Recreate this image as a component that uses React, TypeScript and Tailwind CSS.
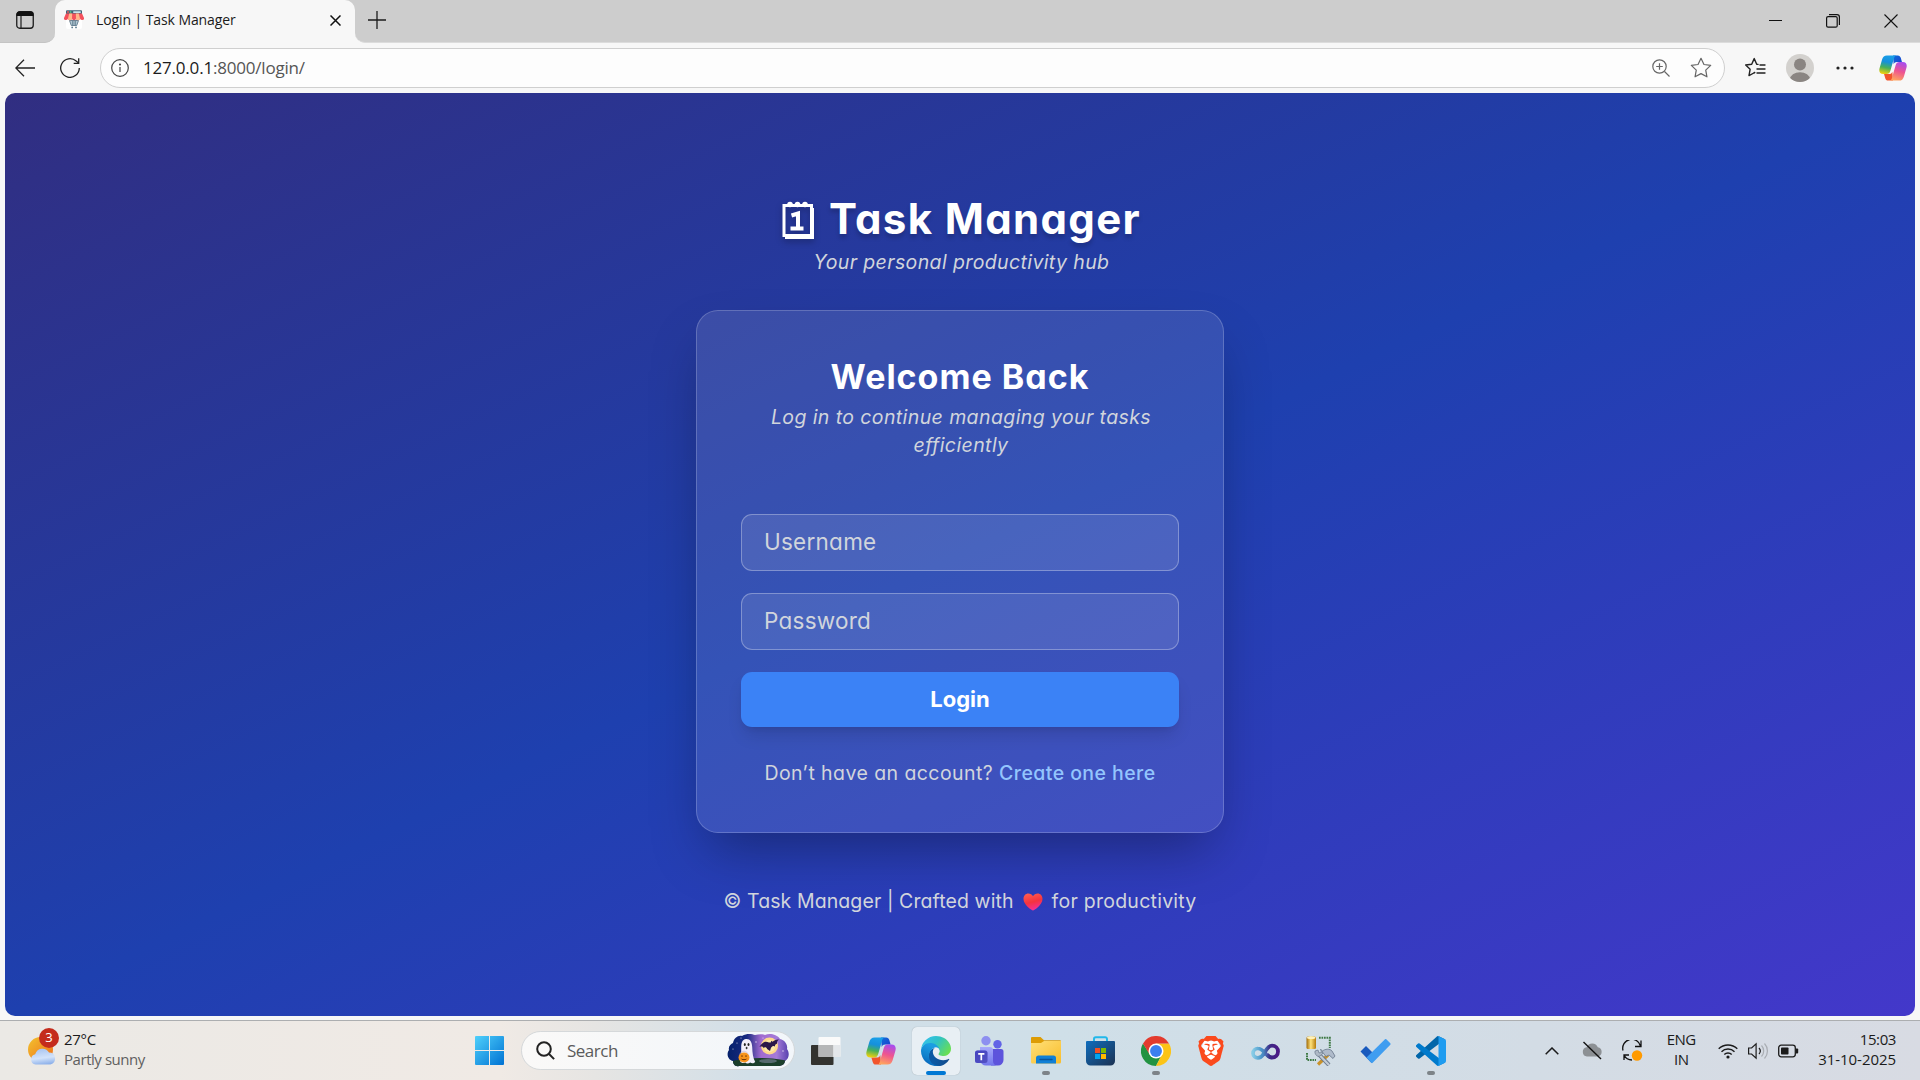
import React from 'react';
import type { ReactNode } from 'react';
import { SiBrave } from 'react-icons/si';

const UI_FONT = "font-['Open_Sans',sans-serif]";
const PAGE_FONT = "font-['Inter',sans-serif] [font-feature-settings:'cv11']";

function StorefrontIcon() {
  return (
    <svg width="20" height="19" viewBox="0 0 20 19">
      <rect x="2" y="7" width="16" height="12" rx="2" fill="#fff" />
      <rect x="2" y="0.3" width="16" height="4" rx="1" fill="#3f6379" />
      <rect x="9" y="1.2" width="8" height="1.8" rx="0.9" fill="#c9e4ee" />
      <circle cx="4" cy="2" r="0.9" fill="#f25c5c" />
      <circle cx="6.5" cy="2" r="0.9" fill="#4cc38a" />
      <path d="M5.500 10.500l1.800 5h5.400l1.800-5z" fill="#b4c8d4" stroke="#5d7b8d" strokeWidth="0.9" />
      <path d="M8.500 11v4M10 11v4M11.500 11v4" stroke="#4b6b7e" strokeWidth="0.6" />
      <circle cx="8.2" cy="17.400" r="0.9" fill="#5d7b8d" />
      <circle cx="12" cy="17.400" r="0.9" fill="#5d7b8d" />
      <path d="M2 3.500h16l2 4.500a2 1.700 0 0 1-4 .600 2 1.700 0 0 1-4 0 2 1.700 0 0 1-4 0 2 1.700 0 0 1-4 0 2 1.700 0 0 1-4-.600z" fill="#f4505c" />
      <path d="M5.200 3.500h3L8 8.600a2 1.700 0 0 1-4 0zM11.800 3.500h3L16 8.600a2 1.700 0 0 1-4 0z" fill="#ffb68a" />
    </svg>
  );
}

function CopilotIcon({ id, size }: { id: string; size: number }) {
  return (
    <svg width={size} height={size} viewBox="0 0 30 30">
      <defs>
        <linearGradient id={`${id}-a`} x1="0.5" y1="0" x2="0.3" y2="1">
          <stop offset="0" stopColor="#1a9fe8" />
          <stop offset="0.35" stopColor="#1590dc" />
          <stop offset="0.65" stopColor="#46b05a" />
          <stop offset="1" stopColor="#f4d10c" />
        </linearGradient>
        <linearGradient id={`${id}-b`} x1="0.7" y1="0" x2="0.4" y2="1">
          <stop offset="0" stopColor="#a64df0" />
          <stop offset="0.5" stopColor="#ee5490" />
          <stop offset="1" stopColor="#ffa45e" />
        </linearGradient>
        <linearGradient id={`${id}-c`} x1="0" y1="0" x2="1" y2="1">
          <stop offset="0" stopColor="#0f6fd8" />
          <stop offset="1" stopColor="#1b3fd0" />
        </linearGradient>
      </defs>
      <path d="M15 1.5h5.2c1.7 0 2.6 1 3.1 2.6L24.600 8.500h-5.400c-1.800 0-2.900.8-3.500 2.600z" fill={`url(#${id}-c)`} />
      <path d="M15 28.500H9.800c-1.700 0-2.600-1-3.100-2.600L5.400 21.500h5.400c1.800 0 2.900-.8 3.500-2.600z" fill="#f2552c" />
      <path d="M8.500 1.500H19c-1.500 0-2.300.9-2.800 2.600l-4 13.900c-.7 2.500-1.900 3.500-4.300 3.500H4.500C1 21.500-.4 18.900.6 15.200L3.300 6c.9-3 2.400-4.500 5.200-4.500z" fill={`url(#${id}-a)`} />
      <path d="M21.500 28.500H11c1.500 0 2.300-.9 2.800-2.600l4-13.900c.7-2.500 1.900-3.500 4.300-3.500h3.400c3.500 0 4.900 2.600 3.900 6.300L26.700 24c-.9 3-2.400 4.500-5.200 4.500z" fill={`url(#${id}-b)`} />
    </svg>
  );
}

function TabStrip() {
  return (
    <div className="flex h-[43px] bg-[#cdcdcd]">
      <div className="flex w-[55px] bg-[#f7f7f7]">
        <div className="flex w-full items-center justify-center rounded-br-[10px] border-b border-[#c4c4c4] bg-[#cdcdcd] pr-[5px] pb-[3px]">
          <svg width="18" height="18" viewBox="0 0 18 18" fill="none">
            <rect x="0.75" y="0.75" width="16.5" height="16.5" rx="3" stroke="#1b1b1b" strokeWidth="1.3" />
            <path d="M0.500 5V3.500a3 3 0 0 1 3-3h11a3 3 0 0 1 3 3V5z" fill="#111" />
            <path d="M5 5v12" stroke="#1b1b1b" strokeWidth="1.200" />
          </svg>
        </div>
      </div>
      <div className="flex w-[300px] items-center rounded-t-[10px] bg-[#f7f7f7] pb-[4px] pl-[9px]">
        <StorefrontIcon />
        <span className="ml-[12px] flex-1 text-[14px] leading-5 tracking-[-0.090px] whitespace-nowrap text-[#1b1b1b]">Login | Task Manager</span>
        <svg className="mt-[2px] mr-[14px]" width="11" height="11" viewBox="0 0 11 11" stroke="#111" strokeWidth="1.500" fill="none">
          <path d="M0.500 0.500l10 10M10.500 0.500l-10 10" />
        </svg>
      </div>
      <div className="flex flex-1 bg-[#f7f7f7]">
        <div className="flex flex-1 items-center rounded-bl-[10px] border-b border-[#dcdcdc] bg-[#cdcdcd] pb-[2px]">
          <svg className="ml-[13px]" width="18" height="18" viewBox="0 0 18 18" stroke="#1b1b1b" strokeWidth="1.300" fill="none">
            <path d="M9 0v18M0 9h18" />
          </svg>
          <div className="mt-[2px] ml-auto flex items-center gap-[44px] pr-[22px]">
            <svg width="13" height="14" viewBox="0 0 13 14" stroke="#111" fill="none"><path d="M0 6.500h13" /></svg>
            <svg width="14" height="14" viewBox="0 0 14 14" stroke="#111" strokeWidth="1.200" fill="none">
              <rect x="0.600" y="2.600" width="10.600" height="10.600" rx="1.500" />
              <path d="M3 0.600h8a2.400 2.400 0 0 1 2.400 2.400v8" />
            </svg>
            <svg width="14" height="14" viewBox="0 0 14 14" stroke="#111" strokeWidth="1.100" fill="none"><path d="M0.500 0.500l13 13M13.500 0.500l-13 13" /></svg>
          </div>
        </div>
      </div>
    </div>
  );
}

const STAR = 'M10 1.200l2.700 5.600 6.100.8-4.500 4.300 1.100 6.100L10 15.100 4.600 18l1.100-6.100L1.200 7.600l6.100-.8z';

function AddressBar() {
  return (
    <div className="flex h-[50px] items-center">
      <svg className="ml-[15px]" width="20" height="18" viewBox="0 0 20 18" stroke="#222" strokeWidth="1.300" fill="none">
        <path d="M20 9H0.800M9 0.800L0.800 9l8.200 8.200" />
      </svg>
      <svg className="ml-[25px]" width="20" height="20" viewBox="0 0 20 20" stroke="#222" strokeWidth="1.300" fill="none">
        <path d="M19.300 10a9.300 9.300 0 1 1-3.100-6.900L18.500 5" />
        <path d="M18.700 0.300v5h-5" />
      </svg>
      <div className="ml-[20px] flex h-[40px] w-[1625px] items-center rounded-full border border-[#cfcfcf] bg-[#fdfdfd]">
        <svg className="ml-[10px]" width="18" height="18" viewBox="0 0 18 18" fill="none" stroke="#444" strokeWidth="1.200">
          <circle cx="9" cy="9" r="8.300" />
          <path d="M9 8v5" />
          <circle cx="9" cy="5.500" r="0.500" fill="#444" />
        </svg>
        <div className="ml-[14px] flex-1 text-[17px] tracking-[-0.200px] text-[#555]"><span className="text-[#1b1b1b]">127.0.0.1</span>:8000/login/</div>
        <svg width="18" height="18" viewBox="0 0 18 18" stroke="#666" strokeWidth="1.200" fill="none">
          <circle cx="7.500" cy="7.500" r="6.700" />
          <path d="M12.500 12.500l5 5M7.500 4.200v6.600M4.200 7.500h6.600" />
        </svg>
        <svg className="mr-[12px] ml-[20px]" width="22" height="22" viewBox="0 0 20 20" stroke="#666" strokeWidth="1.100" fill="none" strokeLinejoin="round">
          <path d={STAR} />
        </svg>
      </div>
      <svg className="ml-[19px]" width="22" height="22" viewBox="0 0 22 22" stroke="#222" strokeWidth="1.400" fill="none" strokeLinejoin="round" strokeLinecap="round">
        <path d="M14 7.400l-1.300-.2-2.500-5.600-2.500 5.600-6 .8 4.400 4.300L5 18.600l4.800-2.600 1-.5M16 8h5M13 12h8M13 16h8" />
      </svg>
      <svg className="ml-[20px]" width="28" height="28" viewBox="0 0 28 28">
        <clipPath id="avatar"><circle cx="14" cy="14" r="14" /></clipPath>
        <g clipPath="url(#avatar)">
          <rect width="28" height="28" fill="#d3d1ce" />
          <circle cx="14" cy="10.500" r="6" fill="#8a8582" />
          <ellipse cx="14" cy="25.500" rx="10" ry="7.300" fill="#8a8582" />
        </g>
      </svg>
      <svg className="ml-[22px]" width="18" height="4" viewBox="0 0 18 4" fill="#222">
        <circle cx="2" cy="2" r="1.600" /><circle cx="9" cy="2" r="1.600" /><circle cx="16" cy="2" r="1.600" />
      </svg>
      <div className="ml-[25px]"><CopilotIcon id="bar" size={28} /></div>
    </div>
  );
}

function CalendarGlyph() {
  return (
    <svg className="mt-[3px] drop-shadow-[0_3px_3px_rgba(0,0,0,0.25)]" width="32" height="39" viewBox="0 0 32 39" fill="none">
      <path d="M2 4.500h27.500v30H2z" stroke="#fff" strokeWidth="3" />
      <path d="M3 36.500h28V7" stroke="#fff" strokeWidth="3" />
      <path d="M7 4.500h18" stroke="#fff" strokeWidth="3" />
      <circle cx="8" cy="3.500" r="2.800" fill="#fff" /><circle cx="15.500" cy="3.500" r="2.800" fill="#fff" /><circle cx="23" cy="3.500" r="2.800" fill="#fff" />
      <path d="M9.500 14.500l6.500-2v14.500M8.500 27.500h13" stroke="#fff" strokeWidth="4" />
    </svg>
  );
}

function Heart() {
  return (
    <svg className="mx-[9px] mt-px" width="20" height="18" viewBox="0 0 20 18">
      <linearGradient id="heart" x1="0.300" y1="0" x2="0.600" y2="1">
        <stop offset="0" stopColor="#ff5b4e" /><stop offset="0.500" stopColor="#f5333f" /><stop offset="1" stopColor="#f52fa0" />
      </linearGradient>
      <path d="M10 17.500c-1 0-9.500-5.500-9.500-11.500C.500 2.800 2.700.600 5.300.600c2 0 3.700 1 4.700 2.700C11 1.600 12.700.600 14.700.600c2.600 0 4.800 2.200 4.800 5.400 0 6-8.500 11.500-9.500 11.500z" fill="url(#heart)" />
    </svg>
  );
}

function Field({ label }: { label: string }) {
  return (
    <div className="flex h-[57px] items-center rounded-[11px] border border-white/30 bg-white/10 pb-px pl-[22px] text-[22.500px] tracking-[0.250px] text-gray-300">{label}</div>
  );
}

function LoginPage() {
  return (
    <main className={`${PAGE_FONT} mx-[5px] flex h-[923px] flex-col items-center rounded-[10px] bg-[linear-gradient(to_bottom_right,#312e81,#1e40af,#4338ca)]`}>
      <h1 className="mt-[102px] flex h-12 items-center gap-[15px] pl-[3px] text-[42px] leading-[48px] font-bold tracking-[1.350px] whitespace-nowrap text-white">
        <CalendarGlyph />
        <span className="[text-shadow:0_4px_4px_rgba(0,0,0,0.18)]">Task Manager</span>
      </h1>
      <p className="mt-[5px] pl-[3px] text-[19.500px] leading-7 tracking-[0.380px] text-gray-300 italic">Your personal productivity hub</p>
      <section className="mt-[34px] flex h-[523px] w-[528px] flex-col rounded-[22px] border border-white/20 bg-white/10 px-[44px] pt-[45px] shadow-[0_27px_55px_-13px_rgba(0,0,0,0.340)]">
        <h2 className="mt-px text-center text-[34px] leading-10 font-bold tracking-[1px] text-white">Welcome Back</h2>
        <p className="mt-[6px] pl-[2px] text-center text-[19.500px] leading-7 tracking-[0.400px] text-gray-300 italic">Log in to continue managing your tasks efficiently</p>
        <div className="mt-[55px] flex flex-col gap-[22px]">
          <Field label="Username" />
          <Field label="Password" />
          <button className="h-[55px] rounded-[11px] bg-[#3b82f6] text-[22px] font-bold text-white shadow-[0_11px_17px_-3px_rgba(0,0,0,0.120),0_4px_7px_-4px_rgba(0,0,0,0.120)]">Login</button>
        </div>
        <p className="mt-[32px] text-center text-[19.500px] leading-7 tracking-[0.430px] whitespace-nowrap text-gray-300">
          Don’t have an account? <a className="font-medium text-[#93c5fd]">Create one here</a>
        </p>
      </section>
      <footer className="mt-[54px] flex items-center text-[19.500px] leading-7 tracking-[0.100px] text-gray-300">
        <span>© Task Manager | Crafted with</span>
        <Heart />
        <span className="tracking-[0.250px]">for productivity</span>
      </footer>
    </main>
  );
}

function WeatherIcon() {
  return (
    <div className="relative h-[37px] w-[32px]">
      <svg width="32" height="37" viewBox="0 0 32 37">
        <defs>
          <linearGradient id="sun" x1="0" y1="0" x2="1" y2="1"><stop offset="0" stopColor="#f2c32e" /><stop offset="1" stopColor="#ef6c1a" /></linearGradient>
          <linearGradient id="cloud" x1="0.300" y1="0" x2="0.500" y2="1"><stop offset="0" stopColor="#a8c4f0" /><stop offset="0.600" stopColor="#d3e3fa" /><stop offset="1" stopColor="#8fb2ea" /></linearGradient>
        </defs>
        <circle cx="12.500" cy="21.500" r="12.500" fill="url(#sun)" />
        <path d="M7.500 36.500a5.200 5.200 0 0 1-.3-10.200A7.500 7.500 0 0 1 21 24.500a6.100 6.100 0 0 1 1.500 12z" fill="url(#cloud)" />
      </svg>
      <span className="absolute top-0 left-[11px] flex size-[20px] items-center justify-center rounded-full bg-[#c42b1c] text-[13px] text-white">3</span>
    </div>
  );
}

function HalloweenArt() {
  return (
    <svg width="62" height="33" viewBox="0 0 62 33">
      <defs>
        <linearGradient id="night" x1="0" y1="0" x2="1" y2="0"><stop offset="0" stopColor="#04206a" /><stop offset="0.320" stopColor="#182a80" /><stop offset="0.550" stopColor="#a26bd0" /><stop offset="0.800" stopColor="#a57bd8" /><stop offset="1" stopColor="#5640ae" /></linearGradient>
        <clipPath id="blob"><path d="M6 27C1 26-1 20 2 16c-1-4 2-6 4-7 1-5 5-8 9-7 5-3 10-2 13-1 4-1 8-1 10 0 4-2 12-1 15 4 5 1 8 6 7 10 3 4 2 10-2 12 0 3-3 5-7 5H12c-4 1-6-2-6-5z" /></clipPath>
      </defs>
      <g clipPath="url(#blob)">
        <rect width="62" height="33" fill="url(#night)" />
        <ellipse cx="33" cy="31" rx="33" ry="7" fill="#1c3f2b" />
        <ellipse cx="41" cy="27" rx="9" ry="2" fill="#7e879b" opacity="0.600" />
        <circle cx="42.500" cy="12" r="8.500" fill="#ffd88c" />
        <circle cx="42.500" cy="12" r="6" fill="#ffeaa8" />
        <g fill="#fff" opacity="0.800"><circle cx="10" cy="9" r="0.600" /><circle cx="6" cy="15" r="0.600" /><circle cx="14" cy="4" r="0.600" /><circle cx="29" cy="8" r="0.700" /><circle cx="36" cy="4" r="0.600" /><circle cx="56" cy="17" r="0.700" /></g>
      </g>
      <path d="M19 5c4-.5 6 3 6.200 8 .2 6 .8 11 3 15-2 2-4 1-5 .5-2 1.500-4 1-5 0-2 1-4 .5-5-1 1-5 1-9 1-14C14.300 9 15 5.500 19 5z" fill="#f3effa" />
      <ellipse cx="17.800" cy="10.500" rx="1" ry="1.600" fill="#222" /><ellipse cx="21.500" cy="10.500" rx="1" ry="1.600" fill="#222" />
      <ellipse cx="19.600" cy="14" rx="0.900" ry="1.200" fill="#333" />
      <path d="M13 21c0-5 8-5 8 0" stroke="#c9c3d8" strokeWidth="0.800" fill="none" />
      <ellipse cx="17" cy="23.500" rx="5.500" ry="5" fill="#f7941d" />
      <path d="M14 22.500l1-1.500 1 1.500zM18 22.500l1-1.500 1 1.500zM13.500 24.500q3.500 3.500 7 0-3.500 1.400-7 0z" fill="#5a2500" />
      <path d="M52 5.500c-3-.2-5 .8-6.500 2.300l-1.200-1-.6 1.600-1.800.2c-3-1.700-6.500-1-9.500 4.400 2-.8 3.400-.5 4 .800 1.700-1.200 3.200-.7 3.700 1.200l2.900 2 1-3.200c1.500-2 2.600-2 4-1.200-.2-1.800.6-2.700 2-2.800-.2-2 .6-3.400 2-4.300z" fill="#2c1748" />
    </svg>
  );
}

function WindowsIcon() {
  return (
    <svg width="29" height="29" viewBox="0 0 29 29">
      <linearGradient id="win" gradientUnits="userSpaceOnUse" x1="0" y1="0" x2="29" y2="29"><stop offset="0" stopColor="#4fd0fb" /><stop offset="1" stopColor="#0072d3" /></linearGradient>
      <path d="M1 0h13v14H0V1a1 1 0 0 1 1-1zM15 0h13a1 1 0 0 1 1 1v13H15zM0 15h14v14H1a1 1 0 0 1-1-1zM15 15h14v13a1 1 0 0 1-1 1H15z" fill="url(#win)" />
    </svg>
  );
}

function TaskViewIcon() {
  return (
    <svg width="30" height="28" viewBox="0 0 30 28">
      <rect y="8" width="22.500" height="20" rx="1" fill="#33332f" />
      <rect x="7.500" width="22" height="20" rx="1" fill="#fafafa" />
      <rect x="7.500" y="8" width="15" height="12" fill="#b5b6b7" />
      <path d="M22.500 8H29.500v11a1 1 0 0 1-1 1h-6z" fill="#e4e7ea" />
    </svg>
  );
}

function EdgeIcon() {
  return (
    <svg width="30" height="30" viewBox="0 0 256 256">
      <defs>
        <linearGradient id="eg1" x1="0.250" y1="0.500" x2="1" y2="0.500"><stop stopColor="#0c59a4" /><stop offset="1" stopColor="#114a8b" /></linearGradient>
        <linearGradient id="eg2" x1="0.600" y1="0.200" x2="0.300" y2="1"><stop stopColor="#1b9de2" /><stop offset="0.600" stopColor="#0f7fcb" /><stop offset="1" stopColor="#0560b8" /></linearGradient>
        <linearGradient id="eg3" x1="0" y1="0.200" x2="1" y2="0.700"><stop stopColor="#35c1f1" /><stop offset="0.450" stopColor="#2fc2c6" /><stop offset="1" stopColor="#6ce04e" /></linearGradient>
      </defs>
      <path d="M235.700 195.500a93.700 93.700 0 0 1-10.600 4.700 101.900 101.900 0 0 1-35.900 6.400c-47.300 0-88.500-32.500-88.500-74.300a31.500 31.500 0 0 1 16.400-27.300c-42.800 1.800-53.800 46.400-53.800 72.500 0 73.900 68.100 81.400 82.800 81.400 7.900 0 19.800-2.300 27-4.600l1.300-.4a128.300 128.300 0 0 0 66.600-52.800 4 4 0 0 0-5.300-5.600z" fill="url(#eg1)" />
      <path d="M105.700 241.400a79.200 79.200 0 0 1-22.700-21.300A80.700 80.700 0 0 1 112.500 100c3.200-1.500 8.500-4.100 15.600-4a32.400 32.400 0 0 1 25.700 13 31.900 31.900 0 0 1 6.300 18.700c0-.2 24.500-79.600-80-79.600-43.900 0-80 41.700-80 78.200a130.200 130.200 0 0 0 12.100 56 128 128 0 0 0 156.400 67 75.500 75.500 0 0 1-62.800-8z" fill="url(#eg2)" />
      <path d="M152.300 148.900c-.8 1-3.300 2.500-3.300 5.700 0 2.600 1.700 5.100 4.700 7.200 14.400 10 41.500 8.700 41.600 8.700a59.600 59.600 0 0 0 30.300-8.300A61.400 61.400 0 0 0 256 109.200c.3-22.400-8-37.300-11.300-43.900C223.500 23.900 177.700 0 128 0A128 128 0 0 0 0 126.200c.5-36.500 36.800-66 80-66 3.500 0 23.500.3 42 10a72.600 72.600 0 0 1 30.900 29.300c6.100 10.600 7.200 24.100 7.200 29.500s-2.700 13.300-7.800 19.900z" fill="url(#eg3)" />
    </svg>
  );
}

function TeamsIcon() {
  return (
    <svg className="mr-[3px]" width="29" height="30" viewBox="0 0 29 30">
      <defs>
        <linearGradient id="tm1" x1="0" y1="0" x2="1" y2="1"><stop stopColor="#5b5fe8" /><stop offset="1" stopColor="#8a8df5" /></linearGradient>
        <linearGradient id="tm2" x1="0" y1="0" x2="0" y2="1"><stop stopColor="#a7a9fb" /><stop offset="1" stopColor="#7176ec" /></linearGradient>
      </defs>
      <circle cx="11" cy="4.700" r="4.700" fill="#8d8ff0" />
      <circle cx="22.500" cy="8.300" r="4.200" fill="#6264e6" />
      <path d="M16 13h10a2.500 2.500 0 0 1 2.500 2.500V24a5.500 5.500 0 0 1-5.500 5.500h-7z" fill="#5d54dc" />
      <path d="M5 11h10a3 3 0 0 1 3 3v11a5 5 0 0 0 3 4.500H11A6 6 0 0 1 5 24z" fill="url(#tm2)" />
      <rect y="14.500" width="12.500" height="12.500" rx="2.500" fill="url(#tm1)" />
      <rect y="14.500" width="12.500" height="12.500" rx="2.500" fill="#3a37ae" opacity="0.700" />
      <path d="M3.200 17.800h6.200M6.300 17.800v6.500" stroke="#fff" strokeWidth="1.700" />
    </svg>
  );
}

function ExplorerIcon() {
  return (
    <svg width="30" height="27" viewBox="0 0 30 27">
      <linearGradient id="fold" x1="0" y1="0" x2="1" y2="1"><stop stopColor="#ffe079" /><stop offset="1" stopColor="#f9bd2b" /></linearGradient>
      <path d="M0 1a1 1 0 0 1 1-1h8.500l3.500 3.200h16a1 1 0 0 1 1 1V10H0z" fill="#dd9c05" />
      <path d="M0 6h10l3-2h17v21a1.500 1.500 0 0 1-1.500 1.500h-27A1.500 1.500 0 0 1 0 25z" fill="url(#fold)" />
      <path d="M5 26.500V21a2.500 2.500 0 0 1 2.500-2.500h15A2.500 2.500 0 0 1 25 21v5.500z" fill="#1180d6" />
      <path d="M9 22.500h12" stroke="#0a559c" strokeWidth="1.400" strokeLinecap="round" />
    </svg>
  );
}

function StoreIcon() {
  return (
    <svg className="mr-[2px]" width="29" height="30" viewBox="0 0 29 30">
      <linearGradient id="store" x1="0" y1="0" x2="1" y2="1"><stop stopColor="#0f6dbd" /><stop offset="1" stopColor="#1c3252" /></linearGradient>
      <path d="M8 6V3a1.800 1.800 0 0 1 1.800-1.800h9.400A1.800 1.800 0 0 1 21 3v3" stroke="#22b8ea" strokeWidth="2" fill="none" />
      <path d="M1 5h27a1 1 0 0 1 1 1v19a4.500 4.500 0 0 1-4.500 4.500h-20A4.500 4.500 0 0 1 0 25V6a1 1 0 0 1 1-1z" fill="url(#store)" />
      <path d="M9 12h5v5H9z" fill="#f25022" /><path d="M15 12h5v5h-5z" fill="#7fba00" /><path d="M9 18h5v5H9z" fill="#00a4ef" /><path d="M15 18h5v5h-5z" fill="#ffb900" />
    </svg>
  );
}

function ChromeIcon() {
  return (
    <svg width="30" height="30" viewBox="0 0 48 48">
      <path d="M24 48A24 24 0 0 1 3.200 12l11.400 17.500L24 35l9.500-5.500z" fill="#229342" />
      <path d="M33.500 29.500L24 48a24 24 0 0 0 20.800-36H24z" fill="#fcc417" />
      <path d="M3.200 12a24 24 0 0 1 41.600 0H24L14 30z" fill="#e33b2e" />
      <circle cx="24" cy="24" r="12" fill="#fff" /><circle cx="24" cy="24" r="9.500" fill="#3b7ff0" />
    </svg>
  );
}

function BraveIcon() {
  return (
    <div className="relative size-[30px]">
      <svg className="absolute inset-0" width="30" height="30" viewBox="0 0 30 30"><path d="M8 5h14l2.500 7L21 23l-6 4.500L9 23 5.500 12z" fill="#fff" /></svg>
      <SiBrave className="absolute inset-0 text-[#fb4a1d]" size={30} />
    </div>
  );
}

function InfinityIcon() {
  return (
    <svg className="mt-[3px] mr-px" width="29" height="18" viewBox="0 0 29 18" fill="none">
      <defs>
        <linearGradient id="infa" x1="0" y1="0" x2="1" y2="0"><stop stopColor="#86cbe6" /><stop offset="0.450" stopColor="#4a94c8" /><stop offset="1" stopColor="#5a35a8" /></linearGradient>
        <linearGradient id="infb" x1="0" y1="0" x2="1" y2="0"><stop stopColor="#4a8ec4" /><stop offset="0.450" stopColor="#3d2a86" /><stop offset="1" stopColor="#4b1a86" /></linearGradient>
      </defs>
      <path d="M21 14.500c-6 0-8-9-14-9a4.700 4.700 0 0 0-5 4.700 4.700 4.700 0 0 0 5 4.700c2.500 0 4-1.500 5.500-3.500" stroke="url(#infa)" strokeWidth="3.600" />
      <path d="M12 12c2.500-3.500 4.500-9.300 9-9.300 3.500 0 6 2.500 6 5.900s-2.500 5.900-6 5.900c-2 0-3.500-1-5-3" stroke="url(#infb)" strokeWidth="3.800" />
    </svg>
  );
}

function DatabaseToolsIcon() {
  return (
    <svg width="30" height="30" viewBox="0 0 30 30" fill="none">
      <linearGradient id="cyl" x1="0" y1="0" x2="1" y2="0"><stop stopColor="#a06a08" /><stop offset="0.450" stopColor="#ffe27a" /><stop offset="1" stopColor="#b57a0a" /></linearGradient>
      <rect x="0.500" y="0.500" width="9.500" height="12.500" rx="1.500" fill="url(#cyl)" />
      <ellipse cx="5.200" cy="1.800" rx="4.300" ry="1.300" fill="#fff1b8" />
      <path d="M13 1.800h10.800V12M1 17v7h9" stroke="#3f7a45" strokeWidth="2" strokeDasharray="1.700 0.800" />
      <path d="M12 28.500L22 19" stroke="#c9922a" strokeWidth="3.200" />
      <path d="M16 15.500c3-3 8-3 10-.5l3 5-2 2.500-4-3.500-3 1.500z" fill="#aebaca" stroke="#5b6b80" strokeWidth="0.700" />
      <path d="M12.500 18L23 29" stroke="#6b7a8d" strokeWidth="4" />
      <path d="M12.500 18L23 29" stroke="#c3ccd6" strokeWidth="2.200" />
      <path d="M9 15l3-1 1 3 2.500-.5-1-3.500a4.500 4.500 0 0 1 2 5l-3.500 2.500A4.500 4.500 0 0 1 9 15z" fill="#aeb9c6" stroke="#6b7a8d" strokeWidth="0.700" />
    </svg>
  );
}

function TodoIcon() {
  return (
    <svg className="mr-px" width="31" height="26" viewBox="0 0 31 26">
      <path d="M0.500 13.500L6 8l9.500 9.500-4 7.500z" fill="#195abd" />
      <path d="M6.500 19.500L25 1.300a1 1 0 0 1 1.300 0l4 4a1 1 0 0 1 0 1.400L12.700 24.800a1 1 0 0 1-1.400 0z" fill="#3f9df0" />
    </svg>
  );
}

function VSCodeIcon() {
  return (
    <svg width="30" height="30" viewBox="0 0 100 100">
      <path d="M96.500 10.800L75.900.9a6.200 6.200 0 0 0-7.100 1.200L1.300 63.600a4.200 4.200 0 0 0 0 6.200l5.500 5a4.200 4.200 0 0 0 5.300.2L93.400 13.400c2.700-2.100 6.600-.1 6.600 3.300v-.3a6.300 6.300 0 0 0-3.500-5.600z" fill="#0065a9" />
      <path d="M96.500 89.200l-20.600 9.900a6.200 6.200 0 0 1-7.100-1.200L1.300 36.400a4.200 4.200 0 0 1 0-6.200l5.500-5a4.200 4.200 0 0 1 5.300-.2l81.300 61.600c2.700 2.100 6.600.1 6.600-3.300v.300a6.300 6.300 0 0 1-3.500 5.600z" fill="#007acc" />
      <path d="M75.900 99.100a6.200 6.200 0 0 1-7.100-1.200c2.300 2.300 6.200.700 6.200-2.600V4.700c0-3.300-3.900-4.900-6.200-2.600A6.200 6.200 0 0 1 75.900.9l20.600 9.900a6.300 6.300 0 0 1 3.500 5.600v67.200a6.300 6.300 0 0 1-3.500 5.600z" fill="#1f9cf0" />
    </svg>
  );
}

function TaskbarItem({ children, state }: { children: ReactNode; state?: 'active' | 'open' }) {
  return (
    <div className={`relative flex size-12 shrink-0 items-center justify-center rounded-[5px] ${state === 'active' ? 'bg-[#e8eff4] shadow-[0_0_1px_rgba(0,0,0,0.300)]' : ''}`}>
      {children}
      {state === 'active' && <span className="absolute bottom-0 left-[14px] h-[4px] w-[20px] rounded-full bg-[#0078d4]" />}
      {state === 'open' && <span className="absolute bottom-0 left-[20px] h-[4px] w-[8px] rounded-full bg-[#7d8388]" />}
    </div>
  );
}

function Tray() {
  return (
    <div className="ml-auto flex items-center text-[15px] leading-5 text-[#1b1b1b]">
      <svg width="14" height="8" viewBox="0 0 14 8" stroke="#1b1b1b" strokeWidth="1.500" fill="none"><path d="M0.700 7.300L7 1l6.300 6.300" /></svg>
      <svg className="ml-[23px]" width="21" height="19" viewBox="0 0 21 19">
        <path d="M5 15.500A4.700 4.700 0 0 1 4.700 6.200 6 6 0 0 1 15.800 6.300 4.700 4.700 0 0 1 16 15.500z" fill="#8c9094" />
        <path d="M1.500 1l17.500 17" stroke="#111" strokeWidth="1.400" />
      </svg>
      <svg className="ml-[19px]" width="21" height="21" viewBox="0 0 21 21" fill="none" stroke="#111" strokeWidth="1.300">
        <path d="M1 10.500A9 9 0 0 1 18.500 6M19 0.500v6h-6M2 20v-5h5M2 15A9 9 0 0 0 10 20" />
        <circle cx="15" cy="15.500" r="5.200" fill="#ff9a00" stroke="none" />
      </svg>
      <div className="mb-[3px] ml-[21px] flex w-[34px] flex-col items-center tracking-[-0.600px]"><span>ENG</span><span>IN</span></div>
      <svg className="ml-[20px]" width="20" height="16" viewBox="0 0 20 16" fill="none" stroke="#1b1b1b" strokeWidth="1.400">
        <path d="M0.700 5.800a13.200 13.200 0 0 1 18.600 0M3.500 8.700a9.200 9.200 0 0 1 13 0M6.300 11.500a5.200 5.200 0 0 1 7.400 0" /><circle cx="10" cy="14" r="1.600" fill="#1b1b1b" stroke="none" />
      </svg>
      <svg className="ml-[10px]" width="21" height="18" viewBox="0 0 21 18" fill="none" stroke="#1b1b1b" strokeWidth="1.200">
        <path d="M0.600 6v6h3l4.500 4.200V1.800L3.600 6zM11 6a4.500 4.500 0 0 1 0 6" /><path d="M13.500 3.500a8 8 0 0 1 0 11M16.500 1.500a11 11 0 0 1 0 15" stroke="#a9adb3" />
      </svg>
      <svg className="ml-[9px]" width="21" height="14" viewBox="0 0 21 14" fill="none">
        <rect x="0.700" y="1.200" width="16.600" height="11.600" rx="2.500" stroke="#1b1b1b" strokeWidth="1.300" /><rect x="3" y="3.500" width="7.500" height="7" rx="0.800" fill="#1b1b1b" /><path d="M18 4.500h1.200a1 1 0 0 1 1 1v3a1 1 0 0 1-1 1H18z" fill="#1b1b1b" />
      </svg>
      <div className="mb-[4px] ml-[19px] flex flex-col items-end pr-[24px]"><span className="tracking-[-0.400px]">15:03</span><span className="tracking-[-0.050px]">31-10-2025</span></div>
    </div>
  );
}

function Taskbar() {
  return (
    <footer className="flex h-[60px] items-center border-t border-[#acaeb0] bg-[linear-gradient(90deg,#ebe9e5_0%,#f0eae5_26%,#e6e5e3_31%,#d2dfe8_39%,#cfdfe8_55%,#d3dce5_80%,#d8dbe3_100%)]">
      <div className="flex w-[465px] items-center pb-[4px] pl-[28px]">
        <div className="pb-[4px]"><WeatherIcon /></div>
        <div className="ml-[4px] flex flex-col text-[15px] leading-5 text-[#1b1b1b]"><span className="tracking-[-0.300px]">27°C</span><span className="tracking-[-0.450px] text-[#5f5f5f]">Partly sunny</span></div>
      </div>
      <TaskbarItem><WindowsIcon /></TaskbarItem>
      <div className="ml-[8px] flex h-[39px] w-[274px] items-center rounded-full border border-[#d5d8da] bg-[linear-gradient(90deg,#faf9f8,#f2f6fa)] pr-[5px] pl-[14px]">
        <svg width="19" height="19" viewBox="0 0 19 19" fill="none" stroke="#222" strokeWidth="2"><circle cx="8" cy="8" r="6.800" /><path d="M12.800 12.800l5.300 5.300" /></svg>
        <span className="ml-[12px] flex-1 text-[17px] tracking-[-0.500px] text-[#5b5b5b]">Search</span>
        <HalloweenArt />
      </div>
      <div className="ml-[7px] flex gap-[7px]">
        <TaskbarItem><TaskViewIcon /></TaskbarItem>
        <TaskbarItem><CopilotIcon id="task" size={30} /></TaskbarItem>
        <TaskbarItem state="active"><EdgeIcon /></TaskbarItem>
        <TaskbarItem><TeamsIcon /></TaskbarItem>
        <TaskbarItem state="open"><ExplorerIcon /></TaskbarItem>
        <TaskbarItem><StoreIcon /></TaskbarItem>
        <TaskbarItem state="open"><ChromeIcon /></TaskbarItem>
        <TaskbarItem><BraveIcon /></TaskbarItem>
        <TaskbarItem><InfinityIcon /></TaskbarItem>
        <TaskbarItem><DatabaseToolsIcon /></TaskbarItem>
        <TaskbarItem><TodoIcon /></TaskbarItem>
        <TaskbarItem state="open"><VSCodeIcon /></TaskbarItem>
      </div>
      <Tray />
    </footer>
  );
}

export default function App() {
  return (
    <div className={`${UI_FONT} flex h-[1080px] w-[1920px] flex-col overflow-hidden bg-[#f7f7f7]`}>
      <TabStrip />
      <AddressBar />
      <LoginPage />
      <div className="h-[4px]" />
      <Taskbar />
    </div>
  );
}
